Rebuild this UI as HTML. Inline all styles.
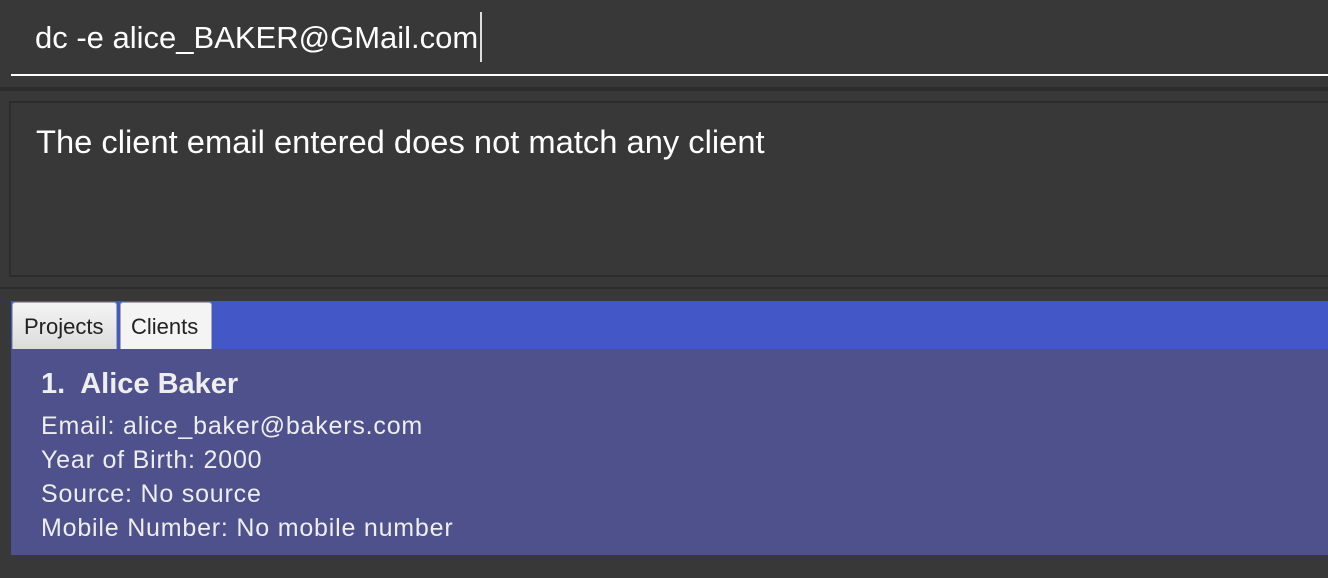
<!DOCTYPE html>
<html><head><style>
body{margin:0;width:1328px;height:578px;background:#383838;position:relative;overflow:hidden;font-family:"Liberation Sans",sans-serif;}
div{position:absolute;box-sizing:border-box;}
.t{white-space:nowrap;}
</style></head><body>
<div class="t" style="left:35px;top:20px;font-size:31px;color:#fff;">dc -e alice_BAKER@GMail.com</div>
<div style="left:480px;top:12px;width:2px;height:50px;background:#ddd;"></div>
<div style="left:11px;top:74px;width:1317px;height:2px;background:#fff;"></div>
<div style="left:0;top:87px;width:1328px;height:4px;background:#2c2c2c;"></div>
<div style="left:9px;top:101px;width:1330px;height:176px;border:2px solid #2c2c2c;"></div>
<div class="t" style="left:36px;top:123px;font-size:32.7px;color:#fff;">The client email entered does not match any client</div>
<div style="left:0;top:287px;width:1328px;height:2px;background:#2c2c2c;"></div>
<div style="left:11px;top:301px;width:1317px;height:48px;background:#4357c7;"></div>
<div style="left:12px;top:302px;width:105px;height:47px;background:linear-gradient(#f4f4f4,#dcdcdc);border:1px solid #aaa;border-bottom:none;border-radius:3px 3px 0 0;"></div>
<div class="t" style="left:24px;top:314px;font-size:22px;color:#222;">Projects</div>
<div style="left:120px;top:302px;width:92px;height:47px;background:#f4f4f4;border:1px solid #aaa;border-bottom:none;border-radius:3px 3px 0 0;"></div>
<div class="t" style="left:131px;top:314px;font-size:22px;color:#222;">Clients</div>
<div style="left:11px;top:349px;width:1317px;height:206px;background:#4f518c;"></div>
<div class="t" style="left:41px;top:368px;font-size:29px;font-weight:bold;color:#eee;">1.&nbsp; Alice Baker</div>
<div class="t" style="left:41px;top:409px;font-size:25px;letter-spacing:0.8px;color:#eee;line-height:34px;">Email: alice_baker@bakers.com<br>Year of Birth: 2000<br>Source: No source<br>Mobile Number: No mobile number</div>
</body></html>
